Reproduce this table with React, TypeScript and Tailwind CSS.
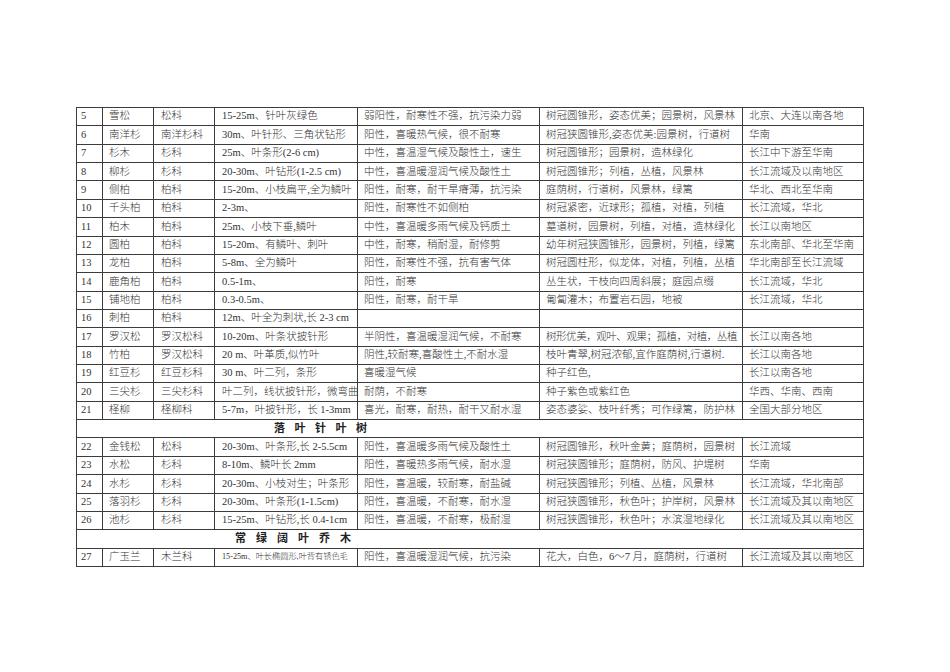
import React from "react";

type Row = {
  no: string;
  name: string;
  family: string;
  form: string;
  habit: string;
  use: string;
  area: string;
  formSmall?: boolean;
  useTight?: boolean;
};

type Section = { header: string; tracking: string; indent: string };

const rows: (Row | Section)[] = [
  { no: "5", name: "雪松", family: "松科", form: "15-25m、针叶灰绿色", habit: "弱阳性，耐寒性不强，抗污染力弱", use: "树冠圆锥形，姿态优美；园景树，风景林", area: "北京、大连以南各地" },
  { no: "6", name: "南洋杉", family: "南洋杉科", form: "30m、叶针形、三角状钻形", habit: "阳性，喜暖热气候，很不耐寒", use: "树冠狭圆锥形,姿态优美:园景树，行道树", area: "华南" },
  { no: "7", name: "杉木", family: "杉科", form: "25m、叶条形(2-6 cm)", habit: "中性，喜温湿气候及酸性土，速生", use: "树冠圆锥形；园景树，造林绿化", area: "长江中下游至华南" },
  { no: "8", name: "柳杉", family: "杉科", form: "20-30m、叶钻形(1-2.5 cm)", habit: "中性，喜温暖湿润气候及酸性土", use: "树冠圆锥形；列植，丛植，风景林", area: "长江流域及以南地区" },
  { no: "9", name: "侧柏", family: "柏科", form: "15-20m、小枝扁平,全为鳞叶", habit: "阳性，耐寒，耐干旱瘠薄，抗污染", use: "庭荫树，行道树，风景林，绿篱", area: "华北、西北至华南" },
  { no: "10", name: "千头柏", family: "柏科", form: "2-3m、", habit: "阳性，耐寒性不如侧柏", use: "树冠紧密，近球形；孤植，对植，列植", area: "长江流域，华北" },
  { no: "11", name: "柏木", family: "柏科", form: "25m、小枝下垂,鳞叶", habit: "中性，喜温暖多雨气候及钙质土", use: "墓道树，园景树，列植，对植，造林绿化", area: "长江以南地区" },
  { no: "12", name: "圆柏", family: "柏科", form: "15-20m、有鳞叶、刺叶", habit: "中性，耐寒，稍耐湿，耐修剪", use: "幼年树冠狭圆锥形，园景树，列植，绿篱", area: "东北南部、华北至华南" },
  { no: "13", name: "龙柏", family: "柏科", form: "5-8m、全为鳞叶", habit: "阳性，耐寒性不强，抗有害气体", use: "树冠圆柱形，似龙体，对植，列植，丛植", area: "华北南部至长江流域" },
  { no: "14", name: "鹿角柏", family: "柏科", form: "0.5-1m、", habit: "阳性，耐寒", use: "丛生状，干枝向四周斜展；庭园点缀", area: "长江流域，华北" },
  { no: "15", name: "铺地柏", family: "柏科", form: "0.3-0.5m、", habit: "阳性，耐寒，耐干旱", use: "匍匐灌木；布置岩石园，地被", area: "长江流域，华北" },
  { no: "16", name: "刺柏", family: "柏科", form: "12m、叶全为刺状,长 2-3 cm", habit: "", use: "", area: "" },
  { no: "17", name: "罗汉松", family: "罗汉松科", form: "10-20m、叶条状披针形", habit: "半阴性，喜温暖湿润气候，不耐寒", use: "树形优美，观叶、观果；孤植，对植，丛植", area: "长江以南各地", useTight: true },
  { no: "18", name: "竹柏", family: "罗汉松科", form: "20 m、叶革质,似竹叶", habit: "阴性,较耐寒,喜酸性土,不耐水湿", use: "枝叶青翠,树冠浓郁,宜作庭荫树,行道树.", area: "长江以南各地" },
  { no: "19", name: "红豆杉", family: "红豆杉科", form: "30 m、叶二列，条形", habit: "喜暖湿气候", use: "种子红色,", area: "长江以南各地" },
  { no: "20", name: "三尖杉", family: "三尖杉科", form: "叶二列，线状披针形，微弯曲", habit: "耐荫，不耐寒", use: "种子紫色或紫红色", area: "华西、华南、西南" },
  { no: "21", name: "柽柳", family: "柽柳科", form: "5-7m，叶披针形，长 1-3mm", habit: "喜光，耐寒，耐热，耐干又耐水湿", use: "姿态婆娑、枝叶纤秀；可作绿篱，防护林", area: "全国大部分地区" },
  { header: "落叶针叶树", tracking: "tracking-[9.5px]", indent: "pl-[197px]" },
  { no: "22", name: "金钱松", family: "松科", form: "20-30m、叶条形,长 2-5.5cm", habit: "阳性，喜温暖多雨气候及酸性土", use: "树冠圆锥形，秋叶金黄；庭荫树，园景树", area: "长江流域" },
  { no: "23", name: "水松", family: "杉科", form: "8-10m、鳞叶长 2mm", habit: "阳性，喜暖热多雨气候，耐水湿", use: "树冠狭圆锥形；庭荫树，防风、护堤树", area: "华南" },
  { no: "24", name: "水杉", family: "杉科", form: "20-30m、小枝对生；叶条形", habit: "阳性，喜温暖，较耐寒，耐盐碱", use: "树冠狭圆锥形；列植、丛植，风景林", area: "长江流域，华北南部" },
  { no: "25", name: "落羽杉", family: "杉科", form: "20-30m、叶条形(1-1.5cm)", habit: "阳性，喜温暖，不耐寒，耐水湿", use: "树冠狭圆锥形，秋色叶；护岸树，风景林", area: "长江流域及其以南地区" },
  { no: "26", name: "池杉", family: "杉科", form: "15-25m、叶钻形,长 0.4-1cm", habit: "阳性，喜温暖，不耐寒，极耐湿", use: "树冠狭圆锥形，秋色叶；水滨湿地绿化", area: "长江流域及其以南地区" },
  { header: "常绿阔叶乔木", tracking: "tracking-[10px]", indent: "pl-[158px]" },
  { no: "27", name: "广玉兰", family: "木兰科", form: "15-25m、叶长椭圆形,叶背有锈色毛", habit: "阳性，喜温暖湿润气候，抗污染", use: "花大，白色，6～7 月，庭荫树，行道树", area: "长江流域及其以南地区", formSmall: true },
];

const td = "border border-[#3c3c3c] pl-[6px] pr-0 align-middle whitespace-nowrap overflow-hidden";

export default function App() {
  return (
    <div className="min-h-[672px] bg-white pt-[107px] pl-[76px] font-['Liberation_Serif','Noto_Sans_CJK_SC',serif] font-light text-[10.5px] leading-none text-[#333]">
      <table className="table-fixed border-collapse w-[787px]">
        <colgroup>
          <col className="w-[26px]" />
          <col className="w-[51px]" />
          <col className="w-[61px]" />
          <col className="w-[143px]" />
          <col className="w-[182px]" />
          <col className="w-[203px]" />
          <col className="w-[121px]" />
        </colgroup>
        <tbody>
          {rows.map((r, i) =>
            "header" in r ? (
              <tr key={i} className="h-[18.36px]">
                <td colSpan={7} className={`border border-[#3c3c3c] align-middle font-bold text-[11px] text-[#222] ${r.indent} ${r.tracking}`}>
                  {r.header}
                </td>
              </tr>
            ) : (
              <tr key={i} className="h-[18.36px]">
                <td className={`${td} !pl-[4px]`}>{r.no}</td>
                <td className={td}>{r.name}</td>
                <td className={`${td} !pl-[7px]`}>{r.family}</td>
                <td className={`${td} !pl-[7px] ${r.formSmall ? "text-[8.2px]" : ""}`}>{r.form}</td>
                <td className={td}>{r.habit}</td>
                <td className={`${td} ${r.useTight ? "tracking-[-0.45px]" : ""}`}>{r.use}</td>
                <td className={td}>{r.area}</td>
              </tr>
            )
          )}
        </tbody>
      </table>
    </div>
  );
}
